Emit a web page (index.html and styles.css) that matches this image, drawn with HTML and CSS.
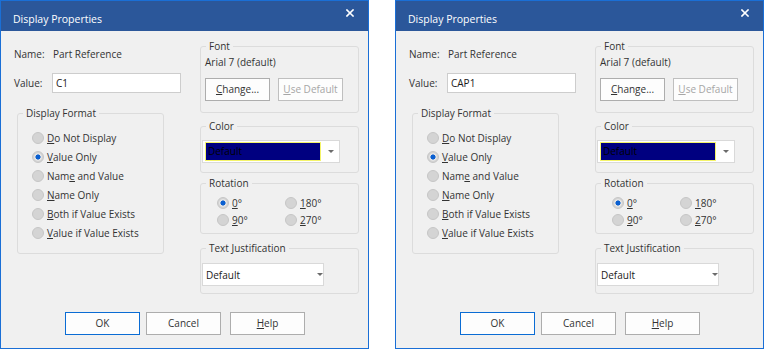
FILE: index.html
```html
<!DOCTYPE html>
<html>
<head>
<meta charset="utf-8">
<link rel="stylesheet" href="styles.css">
</head>
<body>
<div class="screen">

  <div class="dialog">
    <div class="titlebar">
      <span class="title">Display Properties</span>
      <svg class="close" width="8" height="8" viewBox="0 0 8 8"><path d="M1 1L7 7M7 1L1 7" stroke="#fff" stroke-width="1.6" stroke-linecap="square"/></svg>
    </div>
    <div class="content">
      <div class="left">
        <div class="row name-row"><span class="lbl">Name:</span><span>Part Reference</span></div>
        <div class="row value-row"><span class="lbl lbl-v">Value:</span><div class="input">C1</div></div>
        <fieldset class="group g-format">
          <legend>Display Format</legend>
          <div class="radios">
            <div class="radio-row"><span class="radio"></span><span><u>D</u>o Not Display</span></div>
            <div class="radio-row"><span class="radio on"></span><span><u>V</u>alue Only</span></div>
            <div class="radio-row"><span class="radio"></span><span>Nam<u>e</u> and Value</span></div>
            <div class="radio-row"><span class="radio"></span><span><u>N</u>ame Only</span></div>
            <div class="radio-row"><span class="radio"></span><span><u>B</u>oth if Value Exists</span></div>
            <div class="radio-row"><span class="radio"></span><span><u>V</u>alue if Value Exists</span></div>
          </div>
        </fieldset>
      </div>
      <div class="right">
        <fieldset class="group g-font">
          <legend>Font</legend>
          <div class="font-body">
            <div class="font-name">Arial 7 (default)</div>
            <div class="btn-row">
              <div class="btn small"><u>C</u>hange...</div>
              <div class="btn small disabled"><u>U</u>se Default</div>
            </div>
          </div>
        </fieldset>
        <fieldset class="group g-color">
          <legend>Color</legend>
          <div class="combo color-combo">
            <div class="swatch">Default</div>
            <span class="arrow"></span>
          </div>
        </fieldset>
        <fieldset class="group g-rot">
          <legend>Rotation</legend>
          <div class="rot-grid">
            <div class="radio-row"><span class="radio on"></span><span><u>0</u>°</span></div>
            <div class="radio-row"><span class="radio"></span><span><u>1</u>80°</span></div>
            <div class="radio-row"><span class="radio"></span><span><u>9</u>0°</span></div>
            <div class="radio-row"><span class="radio"></span><span><u>2</u>70°</span></div>
          </div>
        </fieldset>
        <fieldset class="group g-just">
          <legend>Text Justification</legend>
          <div class="combo just-combo">
            <span class="combo-text">Default</span>
            <span class="arrow"></span>
          </div>
        </fieldset>
      </div>
    </div>
    <div class="footer">
      <div class="btn big default">OK</div>
      <div class="btn big cancel">Cancel</div>
      <div class="btn big help"><u>H</u>elp</div>
    </div>
  </div>

  <div class="dialog">
    <div class="titlebar">
      <span class="title">Display Properties</span>
      <svg class="close" width="8" height="8" viewBox="0 0 8 8"><path d="M1 1L7 7M7 1L1 7" stroke="#fff" stroke-width="1.6" stroke-linecap="square"/></svg>
    </div>
    <div class="content">
      <div class="left">
        <div class="row name-row"><span class="lbl">Name:</span><span>Part Reference</span></div>
        <div class="row value-row"><span class="lbl lbl-v">Value:</span><div class="input">CAP1</div></div>
        <fieldset class="group g-format">
          <legend>Display Format</legend>
          <div class="radios">
            <div class="radio-row"><span class="radio"></span><span><u>D</u>o Not Display</span></div>
            <div class="radio-row"><span class="radio on"></span><span><u>V</u>alue Only</span></div>
            <div class="radio-row"><span class="radio"></span><span>Nam<u>e</u> and Value</span></div>
            <div class="radio-row"><span class="radio"></span><span><u>N</u>ame Only</span></div>
            <div class="radio-row"><span class="radio"></span><span><u>B</u>oth if Value Exists</span></div>
            <div class="radio-row"><span class="radio"></span><span><u>V</u>alue if Value Exists</span></div>
          </div>
        </fieldset>
      </div>
      <div class="right">
        <fieldset class="group g-font">
          <legend>Font</legend>
          <div class="font-body">
            <div class="font-name">Arial 7 (default)</div>
            <div class="btn-row">
              <div class="btn small"><u>C</u>hange...</div>
              <div class="btn small disabled"><u>U</u>se Default</div>
            </div>
          </div>
        </fieldset>
        <fieldset class="group g-color">
          <legend>Color</legend>
          <div class="combo color-combo">
            <div class="swatch">Default</div>
            <span class="arrow"></span>
          </div>
        </fieldset>
        <fieldset class="group g-rot">
          <legend>Rotation</legend>
          <div class="rot-grid">
            <div class="radio-row"><span class="radio on"></span><span><u>0</u>°</span></div>
            <div class="radio-row"><span class="radio"></span><span><u>1</u>80°</span></div>
            <div class="radio-row"><span class="radio"></span><span><u>9</u>0°</span></div>
            <div class="radio-row"><span class="radio"></span><span><u>2</u>70°</span></div>
          </div>
        </fieldset>
        <fieldset class="group g-just">
          <legend>Text Justification</legend>
          <div class="combo just-combo">
            <span class="combo-text">Default</span>
            <span class="arrow"></span>
          </div>
        </fieldset>
      </div>
    </div>
    <div class="footer">
      <div class="btn big default">OK</div>
      <div class="btn big cancel">Cancel</div>
      <div class="btn big help"><u>H</u>elp</div>
    </div>
  </div>

</div>
</body>
</html>
```
FILE: styles.css
```css
html, body {
  margin: 0;
  padding: 0;
  background: #ffffff;
}

body {
  font-family: "Open Sans", "Noto Sans", sans-serif;
  font-size: 10px;
  color: #333333;
}

.screen {
  display: flex;
  gap: 26px;
  width: 764px;
  height: 349px;
}

.dialog {
  box-sizing: border-box;
  width: 369px;
  height: 349px;
  border: 1px solid #1a6fd6;
  background: #f0f0f0;
  display: flex;
  flex-direction: column;
}

.titlebar {
  height: 30px;
  flex: none;
  background: #2b579a;
  color: #ffffff;
  display: flex;
  justify-content: space-between;
  align-items: flex-start;
  padding: 0 14px 0 12px;
}

.title {
  font-size: 10.5px;
  line-height: 14px;
  margin-top: 11px;
}

.close {
  margin-top: 8px;
  display: block;
}

.content {
  display: flex;
  padding-left: 13px;
}

.left {
  width: 167px;
  display: flex;
  flex-direction: column;
}

.row {
  display: flex;
  align-items: center;
  height: 20px;
}

.name-row {
  margin-top: 13px;
}

.value-row {
  margin-top: 9px;
}

.lbl {
  width: 39px;
  flex: none;
}

.lbl-v {
  width: 38px;
}

.input {
  box-sizing: border-box;
  width: 129px;
  height: 20px;
  background: #ffffff;
  border: 1px solid #cdcdcd;
  line-height: 18px;
  padding-left: 3px;
  color: #1a1a1a;
}

fieldset.group {
  margin: 0;
  padding: 0;
  border: 1px solid #dcdcdc;
  border-radius: 3px;
  min-inline-size: 0;
}

fieldset.group legend {
  margin-left: 5px;
  padding: 0 3px;
  line-height: 15px;
  font-size: 10px;
}

.g-format {
  margin-top: 13px !important;
  margin-left: 3px !important;
  width: 147px;
  box-sizing: border-box;
}

.radios {
  padding: 7px 0 11px 14px;
}

.radio-row {
  display: flex;
  align-items: center;
  height: 19px;
  white-space: nowrap;
}

.radio {
  box-sizing: border-box;
  width: 12px;
  height: 12px;
  border-radius: 50%;
  background: #d4d4d4;
  border: 1px solid #c6c6c6;
  margin-right: 3px;
  flex: none;
}

.radio.on {
  background: radial-gradient(circle, #0a5fd0 0, #0a5fd0 2.3px, #e6e6e6 2.8px, #e6e6e6 3.4px, #d4d4d4 4.2px);
}

.right {
  margin-left: 19px;
  width: 159px;
  display: flex;
  flex-direction: column;
}

.right fieldset.group {
  box-sizing: border-box;
  width: 159px;
}

.g-font {
  margin-top: 8px !important;
}

.font-body {
  padding: 1px 0 11px 4px;
}

.font-name {
  line-height: 14px;
  height: 14px;
}

.btn-row {
  display: flex;
  gap: 8px;
  margin-top: 9px;
}

.btn {
  box-sizing: border-box;
  background: #fdfdfd;
  border: 1px solid #adadad;
  text-align: center;
  color: #333333;
  white-space: nowrap;
}

.btn.small {
  width: 65px;
  height: 23px;
  line-height: 21px;
}

.btn.disabled {
  color: #a6a6a6;
  border-color: #bfbfbf;
}

.g-color {
  margin-top: 6px !important;
}

.combo {
  box-sizing: border-box;
  height: 23px;
  background: #ffffff;
  border: 1px solid #d9d9d9;
  display: flex;
  align-items: center;
  margin-left: 1px;
}

.color-combo {
  width: 138px;
  margin-top: 6px;
  margin-bottom: 9px;
  padding-left: 2px;
}

.swatch {
  box-sizing: border-box;
  width: 116px;
  height: 19px;
  background: #000080;
  border: 1px solid #f4f46a;
  color: #000000;
  line-height: 17px;
  padding-left: 2px;
}

.arrow {
  width: 0;
  height: 0;
  border-left: 3px solid transparent;
  border-right: 3px solid transparent;
  border-top: 3px solid #6b6b6b;
  margin-left: 7px;
}

.g-rot {
  margin-top: 3px !important;
}

.rot-grid {
  display: grid;
  grid-template-columns: 68px 68px;
  grid-auto-rows: 17px;
  padding: 3px 0 5px 16px;
}

.rot-grid .radio-row {
  height: 17px;
}

.g-just {
  margin-top: 7px !important;
}

.just-combo {
  width: 122px;
  margin-top: 7px;
  margin-bottom: 7px;
  padding-left: 3px;
}

.combo-text {
  width: 104px;
  color: #1a1a1a;
}

.footer {
  margin-top: auto;
  display: flex;
  padding: 0 0 13px 64px;
}

.btn.big {
  width: 75px;
  height: 23px;
  line-height: 21px;
}

.btn.default {
  border-color: #0a6cd4;
}

.btn.cancel {
  margin-left: 6px;
}

.btn.help {
  margin-left: 9px;
}
```
